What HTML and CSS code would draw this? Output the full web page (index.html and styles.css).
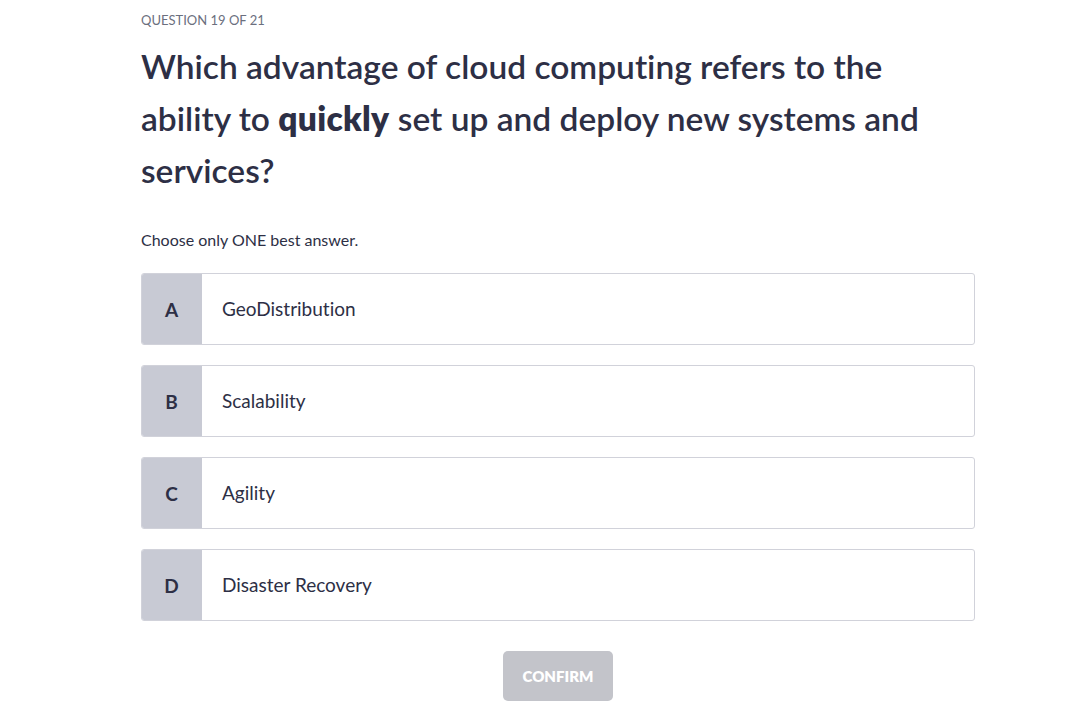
FILE: index.html
```html
<!DOCTYPE html>
<html>
<head>
<meta charset="utf-8">
<link rel="stylesheet" href="styles.css">
</head>
<body>
<main class="quiz">
  <div class="counter">QUESTION 19 OF 21</div>
  <h1 class="question">Which advantage of cloud computing refers to the ability to <strong>quickly</strong> set up and deploy new systems and services?</h1>
  <p class="hint">Choose only ONE best answer.</p>
  <div class="options">
    <div class="option"><div class="letter">A</div><div class="text">GeoDistribution</div></div>
    <div class="option"><div class="letter">B</div><div class="text">Scalability</div></div>
    <div class="option"><div class="letter">C</div><div class="text">Agility</div></div>
    <div class="option"><div class="letter">D</div><div class="text">Disaster Recovery</div></div>
  </div>
  <div class="actions"><button class="confirm">CONFIRM</button></div>
</main>
</body>
</html>
```
FILE: styles.css
```css
html, body { margin: 0; padding: 0; background: #fff; }
body { font-family: "Lato", "Noto Sans", sans-serif; color: #2d2f45; font-variant-ligatures: none; }
.quiz { width: 834px; margin-left: 141px; padding-top: 10px; }
.counter { font-size: 13px; line-height: 20px; color: #6b6f7e; }
.question { margin: 10px 0 0; font-size: 33.5px; line-height: 52px; font-weight: 600; color: #2d2f45; width: 810px; }
.question strong { font-weight: 800; letter-spacing: 0.3px; }
.hint { margin: 34px 0 0; font-size: 16px; line-height: 20px; }
.options { margin-top: 23px; display: flex; flex-direction: column; gap: 20px; }
.option { display: flex; height: 72px; box-sizing: border-box; border: 1px solid #d1d2da; border-radius: 3px; overflow: hidden; }
.letter { width: 61px; flex: none; background: #c8cad4; display: flex; align-items: center; justify-content: center; font-size: 19px; font-weight: 700; margin: -1px 0 -1px -1px; }
.text { display: flex; align-items: center; padding-left: 20px; font-size: 19px; padding-bottom: 1px; }
.actions { display: flex; justify-content: center; margin-top: 30px; }
.confirm { width: 110px; height: 50px; border: none; border-radius: 5px; background: #c3c4ca; color: #fff; font-family: inherit; font-size: 15px; font-weight: 800; }
```
